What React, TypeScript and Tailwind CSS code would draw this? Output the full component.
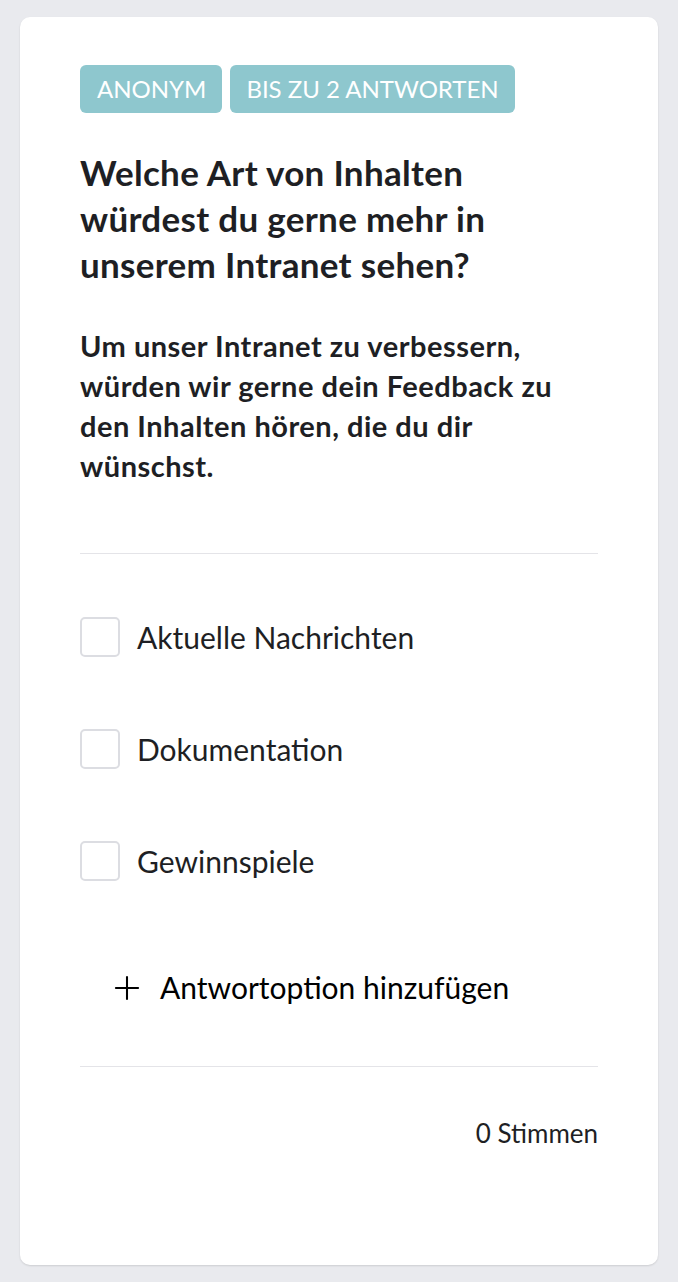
import { Plus } from "lucide-react";

const options = ["Aktuelle Nachrichten", "Dokumentation", "Gewinnspiele"];

const App = () => {
  return (
    <div className="min-h-screen bg-[#e9eaee] px-5 pt-[17px] pb-4 font-['Lato','Noto_Sans',sans-serif]">
      <div className="bg-white rounded-[10px] shadow-[0_1px_2px_rgba(0,0,0,0.12)] h-[1248px] px-[60px] pt-12">
        {/* Tags */}
        <div className="flex gap-2">
          <span className="h-12 pl-[17px] pr-4 flex items-center rounded-md bg-[#8ec7ce] text-white text-[24px] leading-none">
            ANONYM
          </span>
          <span className="h-12 pl-[16px] pr-4 flex items-center rounded-md bg-[#8ec7ce] text-white text-[24px] leading-none">
            BIS ZU 2 ANTWORTEN
          </span>
        </div>

        {/* Question */}
        <h1 className="mt-[36px] text-[35px] leading-[46px] tracking-[0.3px] font-bold text-[#1e1f24] pr-[90px]">
          Welche Art von Inhalten würdest du gerne mehr in unserem Intranet sehen?
        </h1>
        <p className="mt-[39px] text-[29px] leading-10 tracking-[0.5px] font-bold text-[#1e1f24] pr-[40px]">
          Um unser Intranet zu verbessern, würden wir gerne dein Feedback zu den Inhalten hören, die du dir wünschst.
        </p>

        <div className="mt-[67px] border-t border-[#e4e4e8]" />

        {/* Options */}
        <div className="mt-[63px] flex flex-col gap-[72px]">
          {options.map((o) => (
            <label key={o} className="flex items-center gap-[17px] h-10">
              <span className="w-10 h-10 shrink-0 rounded-[5px] border-2 border-[#dcdde2] bg-white" />
              <span className="text-[30px] leading-[45px] text-[#1e1f24]">{o}</span>
            </label>
          ))}
        </div>

        <button className="mt-[84px] ml-[28px] h-[45px] flex items-center gap-[14px] text-[30px] leading-[45px] text-black">
          <Plus className="w-[38px] h-[38px]" strokeWidth={1.3} />
          Antwortoption hinzufügen
        </button>

        <div className="mt-[56px] border-t border-[#e4e4e8]" />

        <div className="mt-[47px] text-right text-[26px] leading-[39px] text-[#1e1f24]">0 Stimmen</div>
      </div>
    </div>
  );
};

export default App;
